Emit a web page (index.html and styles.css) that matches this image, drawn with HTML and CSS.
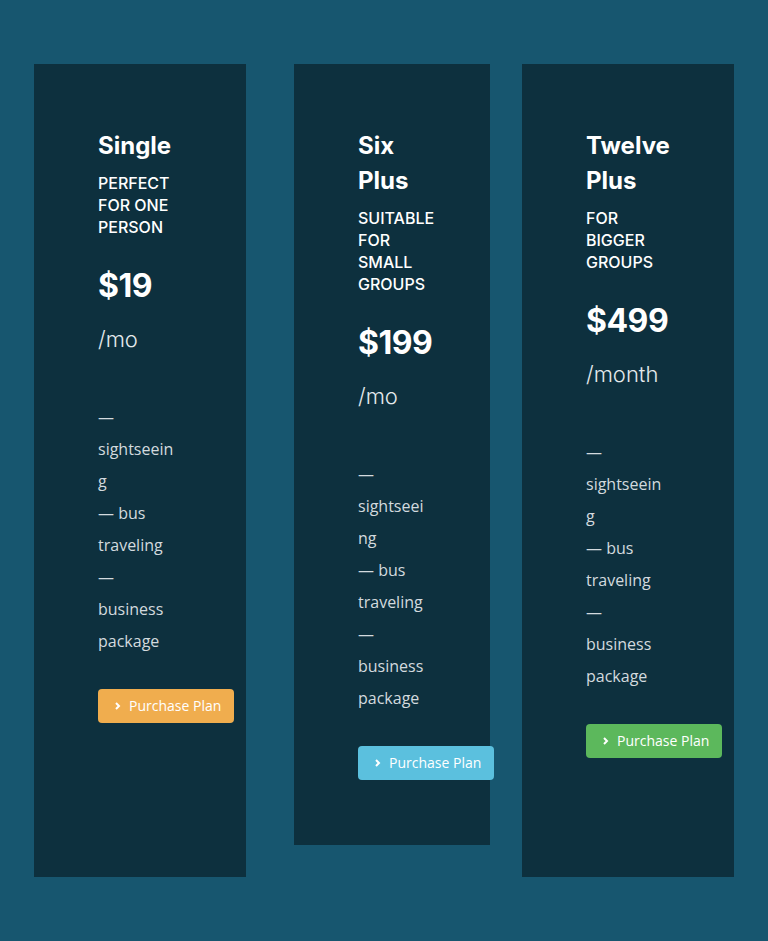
FILE: index.html
```html
<!DOCTYPE html>
<html lang="en">
<head>
  <meta charset="UTF-8">
  <title>Pricing Plans</title>
  <meta name="viewport" content="width=device-width, initial-scale=1.0">
  <link rel="stylesheet" href="styles.css">
</head>
<body>

  <div class="plans">

    <div class="plan">
      <h2>Single</h2>
      <p class="tagline">Perfect for one person</p>
      <div class="price">$19</div>
      <div class="period">/mo</div>
      <ul class="features">
        <li>&mdash; sightseeing</li>
        <li>&mdash; bus traveling</li>
        <li>&mdash; business package</li>
      </ul>
      <a href="#" class="buy-btn orange">
        <svg width="6" height="8" viewBox="0 0 6 8"><path d="M1 1l3 3-3 3" fill="none" stroke="currentColor" stroke-width="2"/></svg>
        Purchase Plan
      </a>
    </div>

    <div class="plan middle">
      <h2>Six Plus</h2>
      <p class="tagline">Suitable for small groups</p>
      <div class="price">$199</div>
      <div class="period">/mo</div>
      <ul class="features">
        <li>&mdash; sightseeing</li>
        <li>&mdash; bus traveling</li>
        <li>&mdash; business package</li>
      </ul>
      <a href="#" class="buy-btn blue">
        <svg width="6" height="8" viewBox="0 0 6 8"><path d="M1 1l3 3-3 3" fill="none" stroke="currentColor" stroke-width="2"/></svg>
        Purchase Plan
      </a>
    </div>

    <div class="plan">
      <h2>Twelve Plus</h2>
      <p class="tagline">For bigger groups</p>
      <div class="price">$499</div>
      <div class="period">/month</div>
      <ul class="features">
        <li>&mdash; sightseeing</li>
        <li>&mdash; bus traveling</li>
        <li>&mdash; business package</li>
      </ul>
      <a href="#" class="buy-btn green">
        <svg width="6" height="8" viewBox="0 0 6 8"><path d="M1 1l3 3-3 3" fill="none" stroke="currentColor" stroke-width="2"/></svg>
        Purchase Plan
      </a>
    </div>

  </div>

</body>
</html>
```

FILE: styles.css
```css
body {
  margin: 0;
  background: #17566f;
  color: #ffffff;
  font-family: 'Open Sans', sans-serif;
}

.plans {
  display: flex;
  align-items: stretch;
  box-sizing: border-box;
  min-height: 100vh;
  padding: 64px 34px;
}

.plan {
  box-sizing: border-box;
  width: 212px;
  flex: none;
  background: #0d303e;
  padding: 64px 66px 64px 64px;
}

.plan.middle {
  width: 196px;
  margin: 0 32px 32px 48px;
}

h2 {
  margin: 0;
  font-family: 'Inter', sans-serif;
  font-size: 24px;
  font-weight: 700;
  line-height: 35px;
}

.tagline {
  margin: 9px 0 0;
  font-family: 'Inter', sans-serif;
  font-size: 16px;
  font-weight: 500;
  line-height: 22px;
  text-transform: uppercase;
}

.price {
  margin-top: 28px;
  font-family: 'Inter', sans-serif;
  font-size: 32px;
  font-weight: 700;
  line-height: 40px;
  letter-spacing: -0.5px;
}

.period {
  margin-top: 18px;
  font-family: 'Inter', sans-serif;
  font-size: 22px;
  font-weight: 300;
  line-height: 30px;
  color: #e4e9ec;
}

.features {
  list-style: none;
  margin: 47px 0 0;
  padding: 0;
  font-size: 16px;
  line-height: 32px;
  color: #d3dade;
  overflow-wrap: break-word;
}

.buy-btn {
  display: inline-flex;
  align-items: center;
  gap: 8px;
  margin-top: 32px;
  padding: 7px 13px 7px 17px;
  border-radius: 4px;
  color: #ffffff;
  text-decoration: none;
  font-size: 14px;
  line-height: 20px;
  white-space: nowrap;
}

.orange { background: #f0ad4e; }
.blue { background: #5bc0de; }
.green { background: #5cb85c; }
```
